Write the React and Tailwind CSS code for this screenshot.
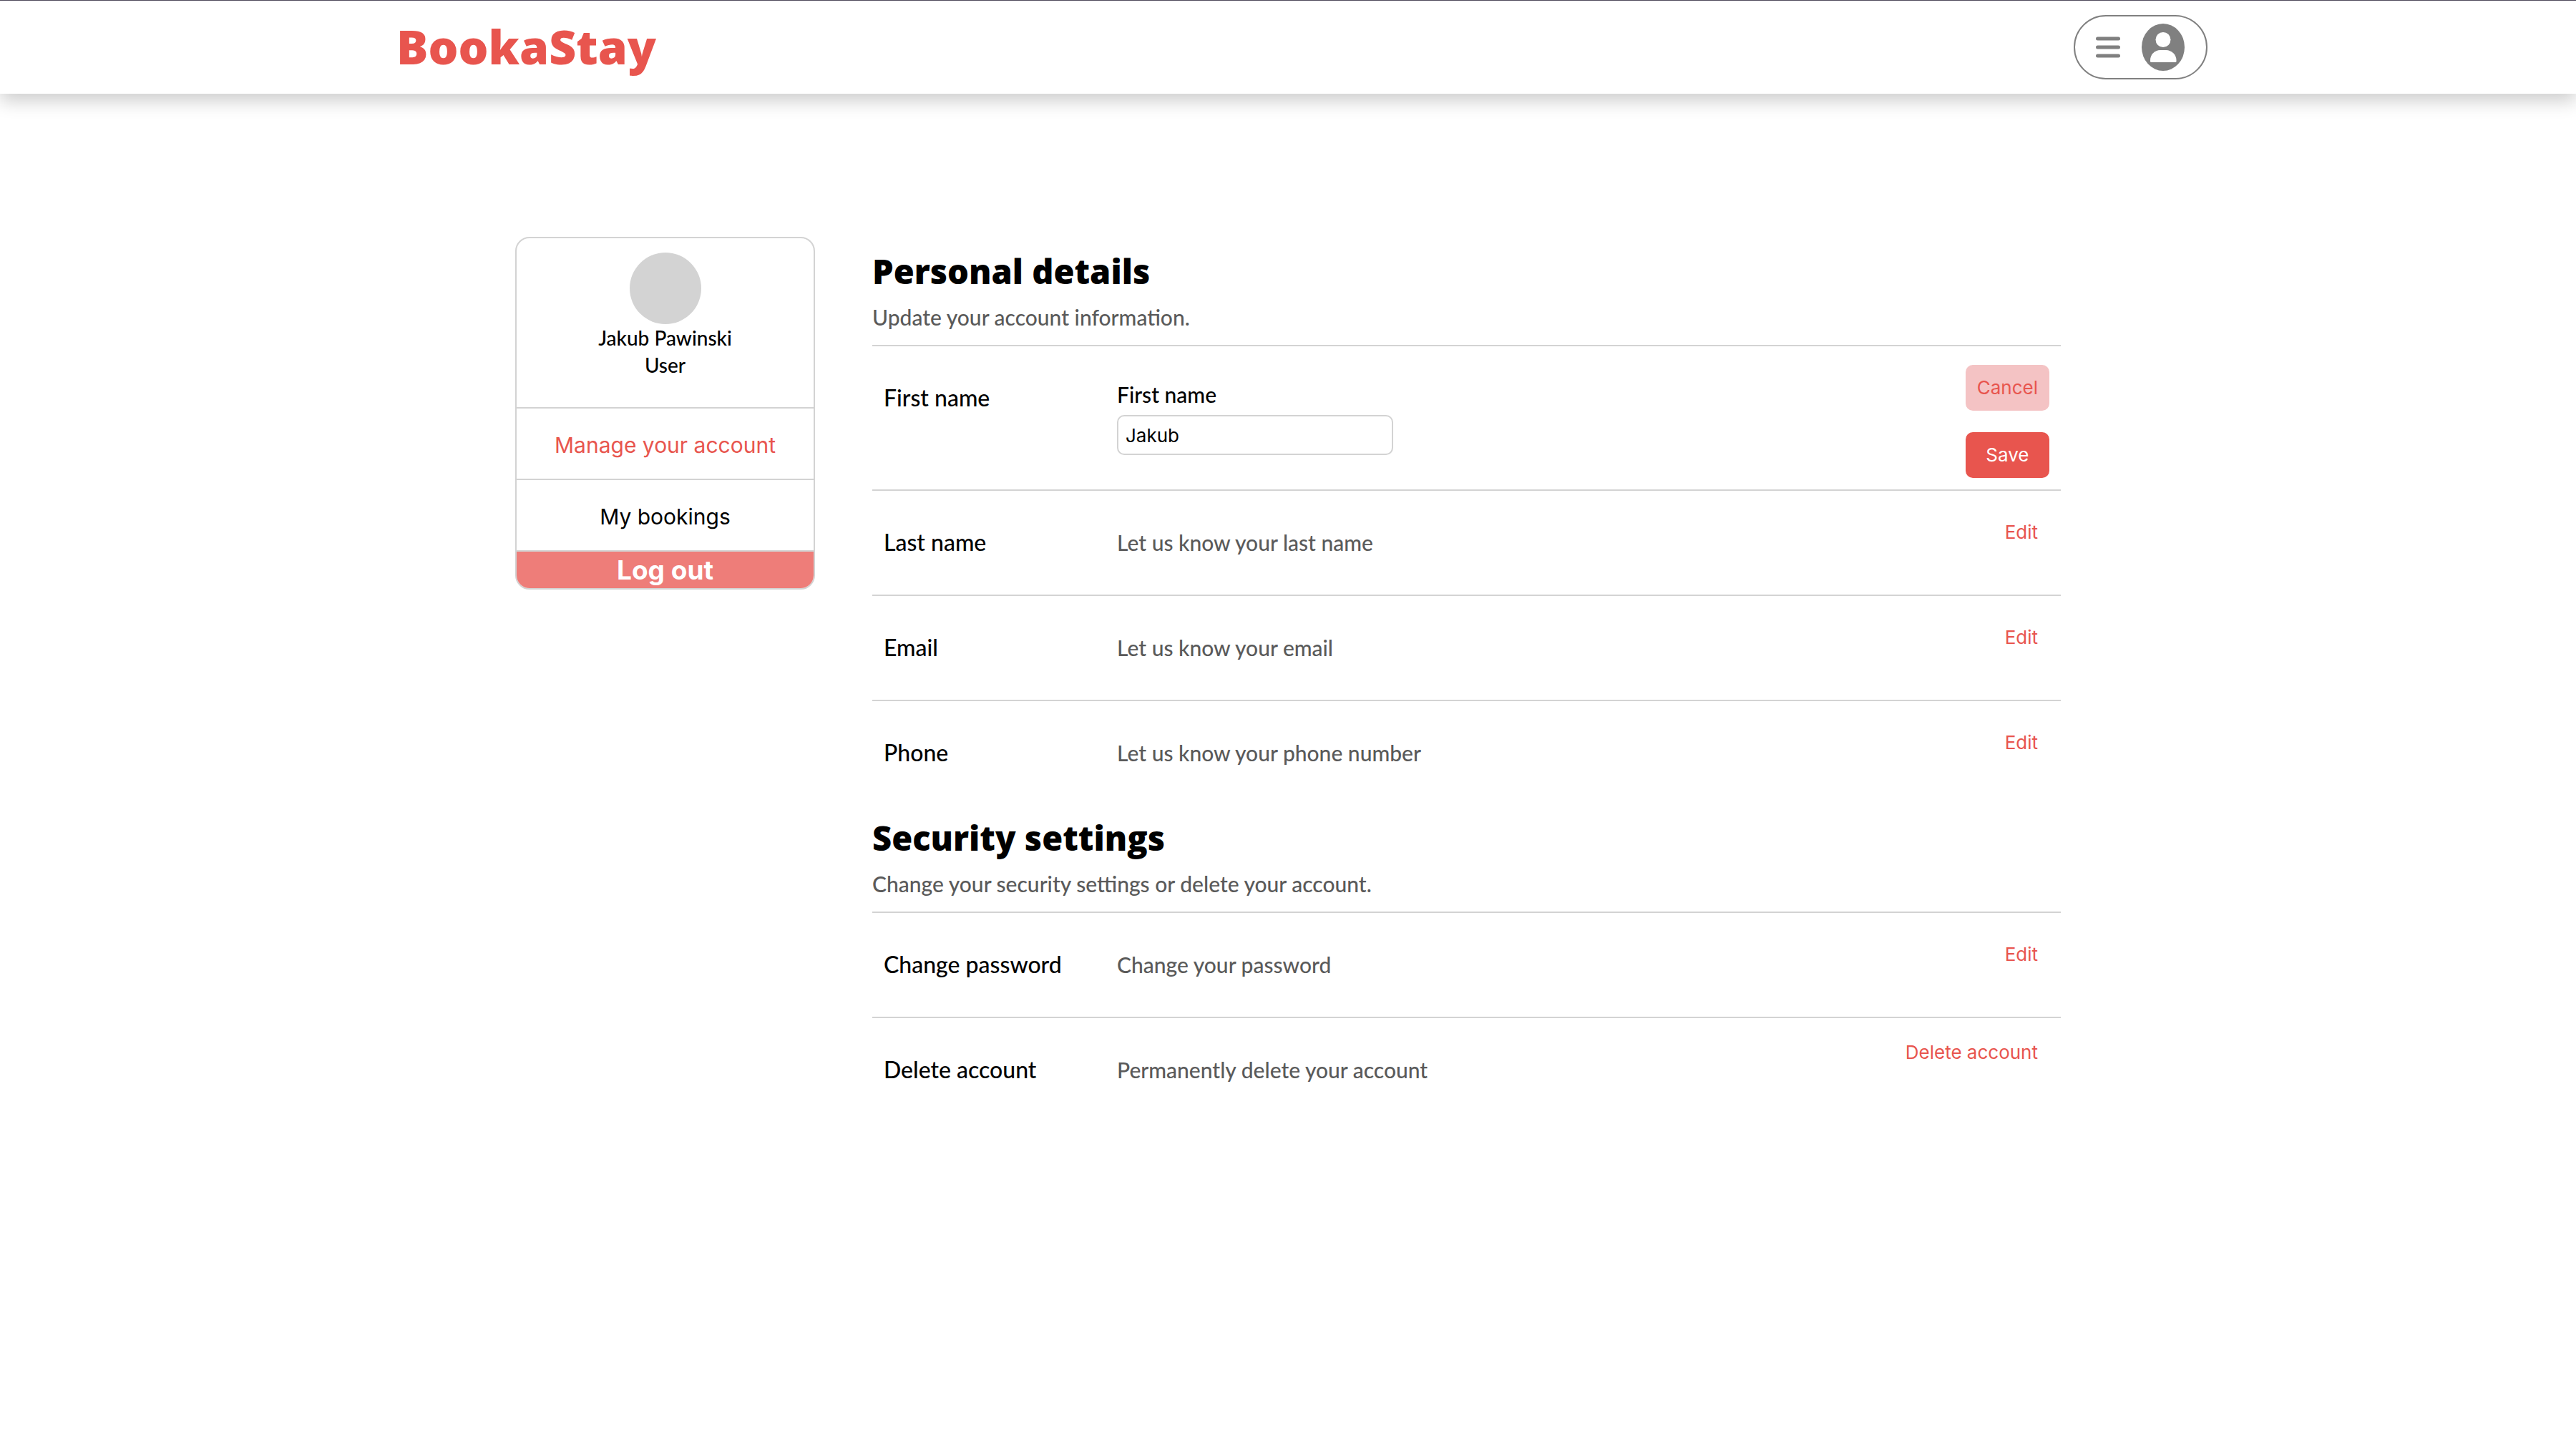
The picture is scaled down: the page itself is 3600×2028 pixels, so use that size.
import React from "react";

function Logo() {
  return (
    <a
      href="#"
      className="pb-1 font-['Open_Sans',sans-serif] text-[66px] leading-[80px] font-extrabold text-[#e8554e]"
    >
      BookaStay
    </a>
  );
}

function UserMenuButton() {
  return (
    <button
      type="button"
      aria-label="Open user menu"
      className="flex h-[90px] items-center gap-[30px] rounded-full border-2 border-[#808080] bg-white pr-[30px] pl-[29px]"
    >
      <svg width="34" height="30" viewBox="0 0 34 30" fill="#808080" aria-hidden="true">
        <rect x="0" y="0.5" width="34" height="5" rx="2.5" />
        <rect x="0" y="12.5" width="34" height="5" rx="2.5" />
        <rect x="0" y="24.5" width="34" height="5" rx="2.5" />
      </svg>
      <svg width="60" height="66" viewBox="0 0 60 66" aria-hidden="true">
        <ellipse cx="30" cy="33" rx="30" ry="33" fill="#808080" />
        <circle cx="30" cy="22.5" r="10.5" fill="#fff" />
        <path
          d="M26 37h8c8 0 14.500 6.500 14.500 14v1.500q0 1.500-1.500 1.500H13.500q-1.500 0-1.500-1.500V51c0-7.500 6-14 14-14z"
          fill="#fff"
        />
      </svg>
    </button>
  );
}

function Header() {
  return (
    <header className="border-t border-[#4f4a5c] bg-white shadow-[0_10px_24px_rgba(0,0,0,0.2)]">
      <div className="mx-auto flex h-[130px] w-[72%] items-center justify-between pr-[11px] pl-[50px]">
        <Logo />
        <UserMenuButton />
      </div>
    </header>
  );
}

function Sidebar() {
  return (
    <aside className="w-[419px] shrink-0 overflow-hidden rounded-[20px] border-2 border-[#d3d3d3] text-center">
      <div className="flex h-[236px] flex-col items-center pt-5 text-[28px] leading-[38px] font-medium">
        <div className="size-[100px] shrink-0 rounded-full bg-[#d3d3d3]" />
        <p>Jakub Pawinski</p>
        <p>User</p>
      </div>
      <nav className="font-['Inter',sans-serif] text-[30px] leading-[38px]">
        <a href="#" className="block border-t-2 border-[#d3d3d3] pt-8 pb-7 text-[#e8554e]">
          Manage your account
        </a>
        <a href="#" className="block border-y-2 border-[#d3d3d3] pt-8 pb-7">
          My bookings
        </a>
      </nav>
      <button
        type="button"
        className="block h-[51px] w-full bg-[#ee7d79] font-['Inter',sans-serif] text-[37px] leading-[46px] font-bold text-white"
      >
        Log out
      </button>
    </aside>
  );
}

function SectionHeading({ title, subtitle }) {
  return (
    <div className="pb-5">
      <h2 className="font-['Open_Sans',sans-serif] text-[47px] leading-[60px] font-extrabold">{title}</h2>
      <p className="pt-[15px] text-[30px] leading-[38px] font-medium text-[#5a5a5a]">{subtitle}</p>
    </div>
  );
}

function TextButton({ children }) {
  return (
    <button
      type="button"
      className="h-16 rounded-[10px] px-4 font-['Inter',sans-serif] text-[26px] leading-8 text-[#e8554e]"
    >
      {children}
    </button>
  );
}

function Row({ label, children, action, tight }) {
  return (
    <div className="flex min-h-[147px] items-start border-t-2 border-[#d3d3d3] px-4">
      <h3 className="w-[326px] shrink-0 pt-[52px] text-[32px] leading-10 font-medium">{label}</h3>
      <div className="grow pt-[52px] text-[30px] leading-10 font-medium text-[#5a5a5a]">{children}</div>
      <div className={tight ? "pt-4" : "pt-[26px]"}>
        <TextButton>{action}</TextButton>
      </div>
    </div>
  );
}

function FirstNameRow() {
  return (
    <form
      onSubmit={(e) => e.preventDefault()}
      className="flex min-h-[202px] items-start border-t-2 border-[#d3d3d3] px-4"
    >
      <h3 className="w-[326px] shrink-0 pt-[52px] text-[32px] leading-10 font-medium">First name</h3>
      <div className="flex grow flex-col items-start pt-12">
        <label htmlFor="first-name" className="text-[30px] leading-[38px] font-medium">
          First name
        </label>
        <input
          id="first-name"
          type="text"
          defaultValue="Jakub"
          className="mt-[10px] h-14 w-[386px] rounded-[10px] border-2 border-[#d3d3d3] bg-white px-[10px] font-['Inter',sans-serif] text-[26px] leading-8 outline-none"
        />
      </div>
      <div className="flex flex-col gap-[30px] pt-[26px] font-['Inter',sans-serif] text-[26px] leading-8">
        <button type="button" className="h-16 rounded-[10px] bg-[#f4c3c4] px-4 text-[#e8554e]">
          Cancel
        </button>
        <button type="submit" className="h-16 rounded-[10px] bg-[#e8554e] px-4 text-white">
          Save
        </button>
      </div>
    </form>
  );
}

export default function App() {
  return (
    <div className="min-h-screen bg-white font-['Lato',sans-serif] text-black">
      <Header />
      <main className="mx-auto flex w-3/5 items-start gap-20 pt-[200px] pb-20">
        <Sidebar />
        <div className="grow pt-[18px]">
          <section>
            <SectionHeading title="Personal details" subtitle="Update your account information." />
            <FirstNameRow />
            <Row label="Last name" action="Edit">
              Let us know your last name
            </Row>
            <Row label="Email" action="Edit">
              Let us know your email
            </Row>
            <Row label="Phone" action="Edit">
              Let us know your phone number
            </Row>
          </section>
          <section className="pt-4">
            <SectionHeading
              title="Security settings"
              subtitle="Change your security settings or delete your account."
            />
            <Row label="Change password" action="Edit">
              Change your password
            </Row>
            <Row label="Delete account" action="Delete account" tight>
              Permanently delete your account
            </Row>
          </section>
        </div>
      </main>
    </div>
  );
}
